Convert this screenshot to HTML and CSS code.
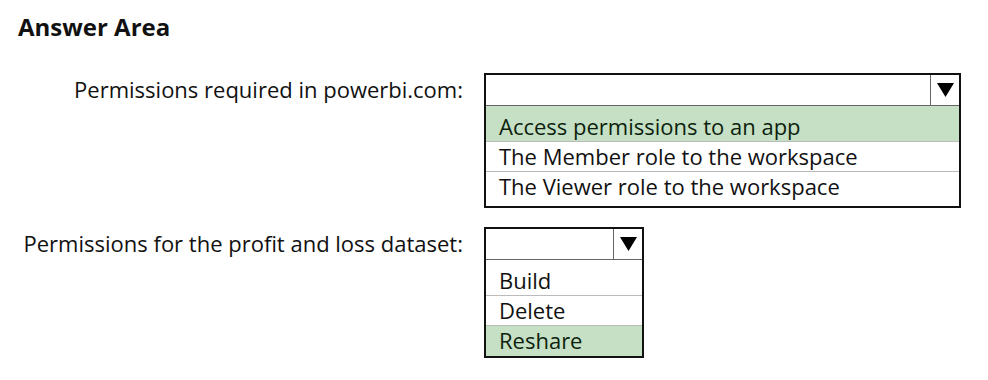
FILE: index.html
```
<!DOCTYPE html>
<html lang="en">

<head>
    <meta charset="utf-8">
    <title>Answer Area</title>
    <link rel="stylesheet" href="styles.css">
</head>

<body>

    <h1 class="title">Answer Area</h1>

    <div class="area">
        <div class="label">Permissions required in powerbi.com:</div>
        <div class="dropdown wide">
            <div class="head">
                <span class="arrow">
                    <svg width="17" height="14" viewBox="0 0 17 14"><polygon points="0,0 17,0 8.5,14" fill="#000"/></svg>
                </span>
            </div>
            <ul class="options">
                <li class="chosen">Access permissions to an app</li>
                <li>The Member role to the workspace</li>
                <li>The Viewer role to the workspace</li>
            </ul>
        </div>

        <div class="label">Permissions for the profit and loss dataset:</div>
        <div class="dropdown narrow">
            <div class="head">
                <span class="arrow">
                    <svg width="17" height="14" viewBox="0 0 17 14"><polygon points="0,0 17,0 8.5,14" fill="#000"/></svg>
                </span>
            </div>
            <ul class="options">
                <li>Build</li>
                <li>Delete</li>
                <li class="chosen">Reshare</li>
            </ul>
        </div>
    </div>

</body>

</html>
```

FILE: styles.css
```
body {
    margin: 0;
    padding: 12px 18px;
    background-color: #fff;
    font-family: 'Open Sans', 'Noto Sans', sans-serif;
    color: #111;
}

.title {
    margin: 0;
    font-size: 24px;
    font-weight: bold;
    line-height: 30px;
}

.area {
    display: grid;
    grid-template-columns: 445px auto;
    column-gap: 21px;
    row-gap: 19px;
    margin-top: 31px;
    justify-content: start;
    align-items: start;
}

.label {
    text-align: right;
    font-size: 22px;
    line-height: 32px;
    white-space: nowrap;
}

.dropdown {
    border: 2px solid #111;
    background-color: #fff;
}

.wide {
    width: 473px;
}

.narrow {
    width: 156px;
}

.head {
    display: flex;
    justify-content: flex-end;
    height: 30px;
    border-bottom: 1px solid #666;
}

.arrow {
    display: flex;
    align-items: center;
    justify-content: center;
    width: 28px;
    border-left: 1px solid #666;
}

.options {
    list-style: none;
    margin: 0;
    padding: 0;
}

.options li {
    height: 29px;
    line-height: 29px;
    padding-left: 13px;
    font-size: 22px;
    border-top: 1px solid #bbb;
    white-space: nowrap;
}

.options li:first-child {
    border-top: none;
    padding-top: 6px;
}

.options li:last-child {
    padding-bottom: 5px;
}

.narrow .options li:last-child {
    padding-bottom: 1px;
}

.options .chosen {
    background-color: #c5e0c4;
    color: #0d1f0e;
}
```
